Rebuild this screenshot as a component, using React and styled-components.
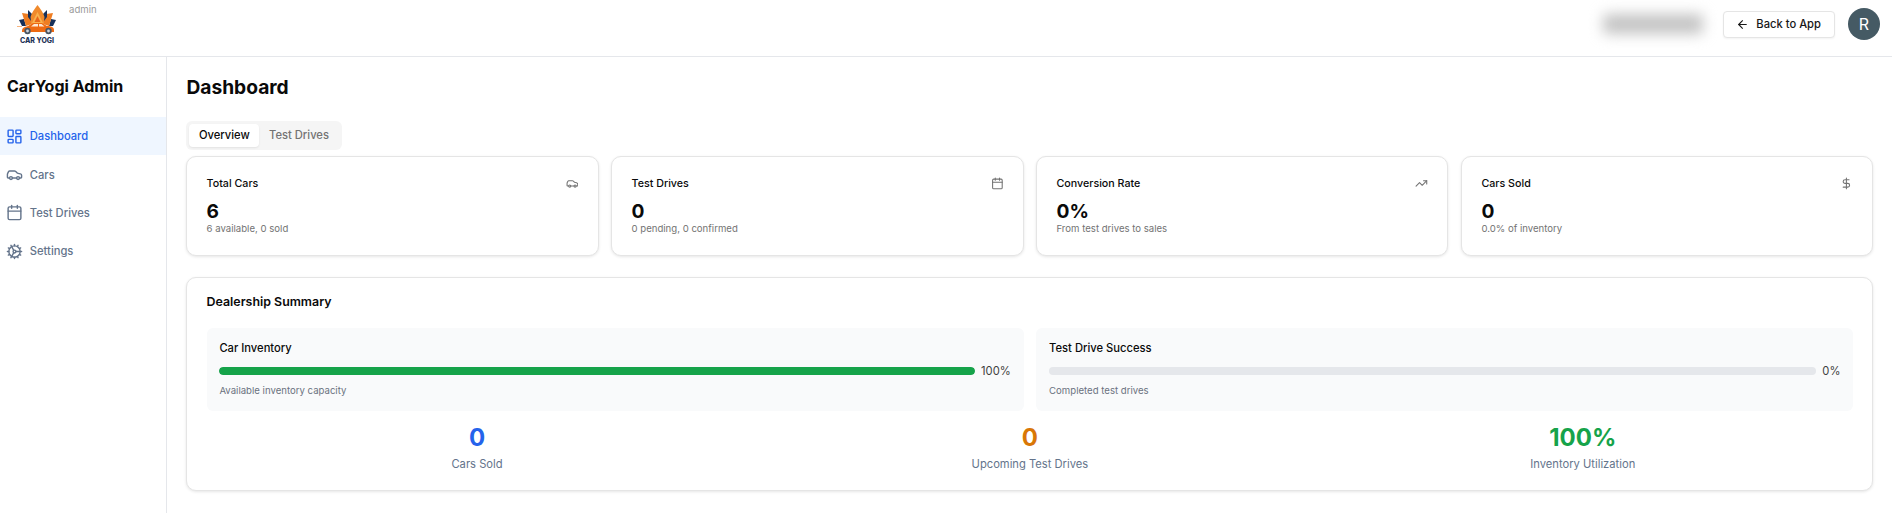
import React from 'react';
import styled, { createGlobalStyle } from 'styled-components';
import {
  ArrowLeft,
  Calendar,
  Car,
  Cog,
  DollarSign,
  LayoutDashboard,
  TrendingUp,
} from 'lucide-react';

const NAV_ITEMS = [
  { label: 'Dashboard', Icon: LayoutDashboard, active: true },
  { label: 'Cars', Icon: Car },
  { label: 'Test Drives', Icon: Calendar },
  { label: 'Settings', Icon: Cog },
];

const STATS = [
  { title: 'Total Cars', value: '6', note: '6 available, 0 sold', Icon: Car },
  { title: 'Test Drives', value: '0', note: '0 pending, 0 confirmed', Icon: Calendar },
  { title: 'Conversion Rate', value: '0%', note: 'From test drives to sales', Icon: TrendingUp },
  { title: 'Cars Sold', value: '0', note: '0.0% of inventory', Icon: DollarSign },
];

const PROGRESS = [
  { title: 'Car Inventory', percent: 100, note: 'Available inventory capacity' },
  { title: 'Test Drive Success', percent: 0, note: 'Completed test drives' },
];

const TOTALS = [
  { value: '0', label: 'Cars Sold', color: '#2563eb' },
  { value: '0', label: 'Upcoming Test Drives', color: '#d97706' },
  { value: '100%', label: 'Inventory Utilization', color: '#16a34a' },
];

const Logo = () => (
  <LogoBox>
    <svg width="44" height="31" viewBox="0 0 44 31">
      {/* lotus */}
      <path d="M4 16l5-1 2 7H7z" fill="#17305a" />
      <path d="M41 16l-5-1-2 7h4z" fill="#17305a" />
      <path d="M7 9l7 1 3 10-6 2z" fill="#ef7d22" />
      <path d="M38 9l-7 1-3 10 6 2z" fill="#ef7d22" />
      <path d="M13 6l5 5-2 6-3-4z" fill="#17305a" />
      <path d="M32 6l-5 5 2 6 3-4z" fill="#17305a" />
      <path d="M22.500 1c3 4 6 8 7 12l-1 8h-12l-1-8c1-4 4-8 7-12z" fill="#f08a2c" />
      <path d="M22.500 8l6 12h-12z" fill="#f9b24e" />
      <path d="M22.500 12l3 6h-6z" fill="#e8661a" />
      {/* car */}
      <path d="M7 27c0-3 2-4 6-5l5-3h9l5 3c4 0 7 1 7 4v2H7z" fill="#ee6a12" />
      <path d="M19 20h4v2.500h-7zM24 20h2.500l3 2.500H24z" fill="#fde7d5" />
      <path d="M2 22h5v.8H2z" fill="#f4a15f" />
      <circle cx="12.500" cy="27" r="3.200" fill="#4b5563" />
      <circle cx="33.500" cy="27" r="3.200" fill="#4b5563" />
      <circle cx="12.500" cy="27" r="1.400" fill="#d1d5db" />
      <circle cx="33.500" cy="27" r="1.400" fill="#d1d5db" />
    </svg>
    <LogoText>CAR YOGI</LogoText>
  </LogoBox>
);

const App = () => {
  return (
    <>
      <GlobalStyle />
      <Page>
        <Header>
          <Brand>
            <Logo />
            <Role>admin</Role>
          </Brand>
          <HeaderActions>
            <BlurredName />
            <BackButton>
              <ArrowLeft size={13} />
              Back to App
            </BackButton>
            <Avatar>R</Avatar>
          </HeaderActions>
        </Header>
        <Body>
          <Sidebar>
            <SidebarTitle>CarYogi Admin</SidebarTitle>
            <nav>
              {NAV_ITEMS.map(({ label, Icon, active }) => (
                <NavItem key={label} $active={active}>
                  <Icon size={17} />
                  {label}
                </NavItem>
              ))}
            </nav>
          </Sidebar>
          <Main>
            <PageTitle>Dashboard</PageTitle>
            <Tabs>
              <Tab $active>Overview</Tab>
              <Tab>Test Drives</Tab>
            </Tabs>
            <StatGrid>
              {STATS.map(({ title, value, note, Icon }) => (
                <Card key={title}>
                  <StatHead>
                    <StatTitle>{title}</StatTitle>
                    <Icon size={12.8} color="#737373" />
                  </StatHead>
                  <StatValue>{value}</StatValue>
                  <StatNote>{note}</StatNote>
                </Card>
              ))}
            </StatGrid>
            <SummaryCard>
              <SummaryTitle>Dealership Summary</SummaryTitle>
              <ProgressGrid>
                {PROGRESS.map(({ title, percent, note }) => (
                  <ProgressBox key={title}>
                    <ProgressTitle>{title}</ProgressTitle>
                    <ProgressRow>
                      <Track>
                        <Fill style={{ width: `${percent}%` }} />
                      </Track>
                      <Percent>{percent}%</Percent>
                    </ProgressRow>
                    <ProgressNote>{note}</ProgressNote>
                  </ProgressBox>
                ))}
              </ProgressGrid>
              <TotalsGrid>
                {TOTALS.map(({ value, label, color }) => (
                  <div key={label}>
                    <TotalValue $color={color}>{value}</TotalValue>
                    <TotalLabel>{label}</TotalLabel>
                  </div>
                ))}
              </TotalsGrid>
            </SummaryCard>
          </Main>
        </Body>
      </Page>
    </>
  );
};

const GlobalStyle = createGlobalStyle`
  * {
    box-sizing: border-box;
  }

  body {
    margin: 0;
    background: #fff;
    color: #0a0a0a;
    font-family: Inter, "Liberation Sans", sans-serif;
  }
`;

const Page = styled.div`
  height: 513px;
  overflow: hidden;
`;

const Header = styled.header`
  display: flex;
  align-items: flex-start;
  justify-content: space-between;
  height: 57px;
  padding-right: 12px;
  border-bottom: 1px solid #e5e7eb;
`;

const Brand = styled.div`
  display: flex;
  align-items: flex-start;
  padding: 4px 0 0 15px;
`;

const LogoBox = styled.div`
  display: flex;
  flex-direction: column;
  align-items: center;
  width: 44px;
`;

const LogoText = styled.span`
  margin-top: 2px;
  color: #1f3358;
  font-size: 7px;
  font-weight: 800;
  line-height: 8px;
  white-space: nowrap;
`;

const Role = styled.span`
  margin: 1px 0 0 10px;
  color: #999;
  font-size: 9.600px;
  line-height: 10px;
`;

const HeaderActions = styled.div`
  display: flex;
  align-items: center;
  padding-top: 8px;
`;

const BlurredName = styled.div`
  width: 100px;
  height: 20px;
  margin-right: 20px;
  background: #c4c4c4;
  border-radius: 4px;
  filter: blur(7px);
`;

const BackButton = styled.button`
  display: flex;
  align-items: center;
  gap: 7px;
  height: 27px;
  margin-right: 13.300px;
  padding: 0 12.800px;
  background: #fff;
  border: 1px solid #e5e5e5;
  border-radius: 4px;
  box-shadow: 0 1px 2px rgba(0, 0, 0, 0.05);
  color: #171717;
  font-family: inherit;
  font-size: 11.200px;
  font-weight: 500;
`;

const Avatar = styled.div`
  display: flex;
  align-items: center;
  justify-content: center;
  width: 32px;
  height: 32px;
  background: #455a64;
  border-radius: 50%;
  color: #fff;
  font-size: 16px;
`;

const Body = styled.div`
  display: flex;
`;

const Sidebar = styled.aside`
  flex: none;
  width: 167px;
  height: 456px;
  border-right: 1px solid #e5e7eb;
`;

const SidebarTitle = styled.h2`
  margin: 0;
  padding: 16.700px 0 19.300px 7px;
  font-size: 16px;
  font-weight: 700;
  line-height: 24px;
`;

const NavItem = styled.a`
  display: flex;
  align-items: center;
  gap: 6.400px;
  height: 38.400px;
  padding-left: 6.400px;
  background: ${({ $active }) => ($active ? '#eff6ff' : 'transparent')};
  color: ${({ $active }) => ($active ? '#2563eb' : '#64748b')};
  font-size: 11.200px;
  font-weight: 500;
`;

const Main = styled.main`
  flex: 1;
  min-width: 0;
  padding: 16px 18.600px 0 19.400px;
`;

const PageTitle = styled.h1`
  margin: 0 0 19.500px;
  font-size: 19.200px;
  font-weight: 700;
  line-height: 28px;
`;

const Tabs = styled.div`
  display: inline-flex;
  height: 29px;
  padding: 3px;
  background: #f5f5f5;
  border-radius: 6px;
  vertical-align: top;
`;

const Tab = styled.button`
  height: 23px;
  padding: 0 9.600px;
  background: ${({ $active }) => ($active ? '#fff' : 'transparent')};
  border: 0;
  border-radius: 4px;
  box-shadow: ${({ $active }) => ($active ? '0 1px 2px rgba(0, 0, 0, 0.08)' : 'none')};
  color: ${({ $active }) => ($active ? '#0a0a0a' : '#737373')};
  font-family: inherit;
  font-size: 11.200px;
  font-weight: 500;
`;

const StatGrid = styled.div`
  display: grid;
  grid-template-columns: repeat(4, 1fr);
  gap: 12.800px;
  margin-top: 6px;
`;

const Card = styled.section`
  height: 100.500px;
  padding: 19.200px;
  background: #fff;
  border: 1px solid #e5e5e5;
  border-radius: 10px;
  box-shadow: 0 1px 3px rgba(0, 0, 0, 0.1);
`;

const StatHead = styled.div`
  display: flex;
  align-items: center;
  justify-content: space-between;
  height: 14px;
  margin-top: 1px;
`;

const StatTitle = styled.span`
  font-size: 10.700px;
  font-weight: 500;
  line-height: 14px;
`;

const StatValue = styled.div`
  margin-top: 8px;
  font-size: 19.200px;
  font-weight: 700;
  line-height: 24px;
`;

const StatNote = styled.div`
  color: #737373;
  font-size: 9.600px;
  line-height: 12px;
`;

const SummaryCard = styled(Card)`
  height: 214.500px;
  margin-top: 20.800px;
`;

const SummaryTitle = styled.h3`
  margin: 0 0 21.400px;
  font-size: 12.400px;
  font-weight: 600;
  line-height: 10px;
`;

const ProgressGrid = styled.div`
  display: grid;
  grid-template-columns: 1fr 1fr;
  gap: 12.800px;
`;

const ProgressBox = styled.div`
  height: 82.400px;
  padding: 12.800px 12.800px 0;
  background: #f9fafb;
  border-radius: 6px;
`;

const ProgressTitle = styled.div`
  font-size: 11.200px;
  font-weight: 500;
  line-height: 14px;
`;

const ProgressRow = styled.div`
  display: flex;
  align-items: center;
  gap: 6.400px;
  margin-top: 9.200px;
`;

const Track = styled.div`
  flex: 1;
  height: 8px;
  overflow: hidden;
  background: #e5e7eb;
  border-radius: 4px;
`;

const Fill = styled.div`
  height: 100%;
  background: #16a34a;
  border-radius: 4px;
`;

const Percent = styled.span`
  color: #404040;
  font-size: 11.200px;
  line-height: 14px;
`;

const ProgressNote = styled.div`
  margin-top: 6.400px;
  color: #6b7280;
  font-size: 9.600px;
  line-height: 12px;
`;

const TotalsGrid = styled.div`
  display: grid;
  grid-template-columns: repeat(3, 1fr);
  margin: 11px -6px 0;
  text-align: center;
`;

const TotalValue = styled.div`
  color: ${({ $color }) => $color};
  font-size: 24px;
  font-weight: 700;
  line-height: 32px;
`;

const TotalLabel = styled.div`
  margin-top: 3.300px;
  color: #64748b;
  font-size: 11.200px;
  line-height: 14px;
`;

export default App;
